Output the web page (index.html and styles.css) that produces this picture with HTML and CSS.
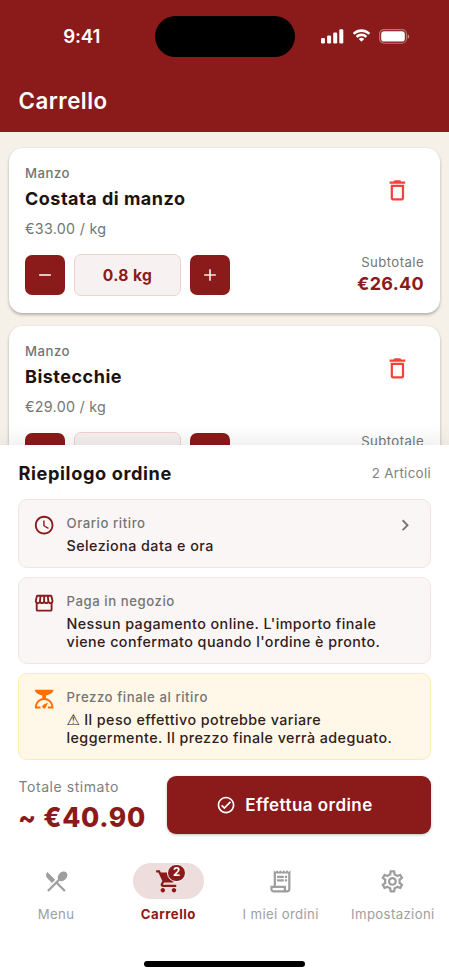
FILE: index.html
```html
<!DOCTYPE html>
<html lang="it">
<head>
<meta charset="utf-8">
<meta name="viewport" content="width=device-width, initial-scale=1">
<title>Carrello</title>
<link rel="stylesheet" href="styles.css">
</head>
<body>
<svg class="defs" aria-hidden="true">
  <symbol id="trash" viewBox="0 0 24 24"><path d="M6 19c0 1.1.9 2 2 2h8c1.1 0 2-.9 2-2V7H6v12zM8 9h8v10H8V9zm7.5-5l-1-1h-5l-1 1H5v2h14V4h-3.5z"/></symbol>
  <symbol id="minus" viewBox="0 0 24 24"><path d="M19 13H5v-2h14v2z"/></symbol>
  <symbol id="plus" viewBox="0 0 24 24"><path d="M19 13h-6v6h-2v-6H5v-2h6V5h2v6h6v2z"/></symbol>
</svg>
<div class="app">
  <header class="header">
    <div class="status">
      <span class="time">9:41</span>
      <div class="island"></div>
      <div class="signals">
        <svg width="23" height="15" viewBox="0 0 23 15"><rect x="0" y="9" width="4" height="5.5" rx="1.2"/><rect x="6.1" y="6.6" width="4" height="7.9" rx="1.2"/><rect x="12.2" y="3.6" width="4" height="10.9" rx="1.2"/><rect x="18.3" y="0.2" width="4" height="14.3" rx="1.2"/></svg>
        <svg class="wifi" width="19" height="15" viewBox="0 0 19 15"><path d="M9.5 2.9c2.5 0 4.9 1 6.7 2.7.15.14.36.14.5 0l1.3-1.35c.15-.15.15-.4 0-.55C13.3-.9 5.7-.9 1 3.7c-.15.15-.15.4 0 .55l1.3 1.35c.14.14.36.14.5 0C4.6 3.9 7 2.9 9.5 2.9zM9.5 7.25c1.37 0 2.69.5 3.7 1.43.14.13.36.13.5-.01l1.3-1.35c.15-.15.15-.4 0-.55-3.1-2.93-7.9-2.93-11 0-.15.15-.15.4 0 .55l1.3 1.35c.14.14.36.14.5.01A5.45 5.45 0 0 1 9.5 7.25zM12 10.3c.15-.15.15-.4-.01-.54a3.8 3.8 0 0 0-4.98 0c-.16.14-.16.39-.01.54l2.25 2.3c.14.14.36.14.5 0z"/></svg>
        <svg class="battery" width="31" height="15" viewBox="0 0 31 15"><rect x=".6" y=".6" width="26.8" height="13.6" rx="4.3" fill="none" stroke="#fff" stroke-opacity=".4" stroke-width="1.1"/><rect x="2.2" y="2.2" width="23.6" height="10.4" rx="2.9"/><path fill-opacity=".5" d="M28.7 5.2v4.6c.9-.4 1.5-1.3 1.5-2.3s-.6-1.9-1.5-2.3z"/></svg>
      </div>
    </div>
    <h1 class="title">Carrello</h1>
  </header>

  <main class="list">
    <article class="card">
      <div class="card-top">
        <div>
          <div class="category">Manzo</div>
          <h2 class="name">Costata di manzo</h2>
          <div class="price">€33.00 / kg</div>
        </div>
        <svg class="trash"><use href="#trash"/></svg>
      </div>
      <div class="card-bottom">
        <div class="stepper">
          <button class="step"><svg><use href="#minus"/></svg></button>
          <div class="qty">0.8 kg</div>
          <button class="step"><svg><use href="#plus"/></svg></button>
        </div>
        <div class="subtotal"><div class="sub-label">Subtotale</div><div class="sub-value">€26.40</div></div>
      </div>
    </article>
    <article class="card">
      <div class="card-top">
        <div>
          <div class="category">Manzo</div>
          <h2 class="name">Bistecchie</h2>
          <div class="price">€29.00 / kg</div>
        </div>
        <svg class="trash"><use href="#trash"/></svg>
      </div>
      <div class="card-bottom">
        <div class="stepper">
          <button class="step"></button>
          <div class="qty"></div>
          <button class="step"></button>
        </div>
        <div class="subtotal"><div class="sub-label">Subtotale</div></div>
      </div>
    </article>
  </main>

  <section class="sheet">
    <div class="sheet-head"><h2 class="sheet-title">Riepilogo ordine</h2><span class="count">2 Articoli</span></div>
    <div class="info info-short">
      <svg class="info-icon" viewBox="0 0 24 24"><path d="M11.99 2C6.47 2 2 6.48 2 12s4.47 10 9.99 10C17.52 22 22 17.52 22 12S17.52 2 11.99 2zM12 20c-4.42 0-8-3.58-8-8s3.58-8 8-8 8 3.58 8 8-3.58 8-8 8zm.5-13H11v6l5.25 3.15.75-1.23-4.5-2.67z"/></svg>
      <div class="info-body"><div class="info-label">Orario ritiro</div><div class="info-text">Seleziona data e ora</div></div>
      <svg class="chevron" viewBox="0 0 24 24"><path d="M10 6L8.59 7.41 13.17 12l-4.58 4.59L10 18l6-6z"/></svg>
    </div>
    <div class="info">
      <svg class="info-icon" viewBox="0 0 24 24"><path d="M21.9 8.89l-1.05-4.37c-.22-.9-1-1.52-1.91-1.52H5.05c-.9 0-1.69.63-1.9 1.52L2.1 8.89c-.24 1.02-.02 2.06.62 2.88.08.11.19.19.28.29V19c0 1.1.9 2 2 2h14c1.1 0 2-.9 2-2v-6.94c.09-.09.2-.18.28-.28.64-.82.87-1.87.62-2.89zm-2.99-3.9l1.05 4.37c.1.42.01.84-.25 1.17-.14.18-.44.47-.94.47-.61 0-1.14-.49-1.21-1.14L16.98 5l1.93-.01zM13 5h1.96l.54 4.52c.05.39-.07.78-.33 1.07-.22.26-.54.41-.95.41-.67 0-1.22-.59-1.22-1.31V5zM8.49 9.52L9.04 5H11v4.69c0 .72-.55 1.31-1.29 1.31-.34 0-.65-.15-.89-.41-.25-.29-.37-.68-.33-1.07zm-4.45-.16L5.05 5h1.97l-.58 4.86c-.08.65-.6 1.14-1.21 1.14-.49 0-.8-.29-.93-.47-.27-.32-.36-.75-.26-1.17zM5 19v-6.03c.08.01.15.03.23.03.87 0 1.66-.36 2.24-.95.6.6 1.4.95 2.31.95.87 0 1.65-.36 2.23-.93.59.57 1.39.93 2.29.93.84 0 1.64-.35 2.24-.95.58.59 1.37.95 2.24.95.08 0 .15-.02.23-.03V19H5z"/></svg>
      <div class="info-body"><div class="info-label">Paga in negozio</div><div class="info-text">Nessun pagamento online. L'importo finale<br>viene confermato quando l'ordine è pronto.</div></div>
    </div>
    <div class="info info-warn">
      <svg class="info-icon" viewBox="0 0 24 24"><path d="M14 11V8c4.56-.58 8-3.1 8-6H2c0 2.9 3.44 5.42 8 6v3c-3.68.73-8 3.61-8 11h6v-2H4.13c.93-6.83 6.65-7.2 7.87-7.2s6.94.37 7.87 7.2H16v2h6c0-7.39-4.32-10.27-8-11zM12 22c-1.1 0-2-.9-2-2 0-.55.22-1.05.59-1.41C11.39 17.79 16 16 16 16s-1.79 4.61-2.59 5.41c-.36.37-.86.59-1.41.59z"/></svg>
      <div class="info-body"><div class="info-label">Prezzo finale al ritiro</div><div class="info-text"><span class="warn-sign">⚠</span> Il peso effettivo potrebbe variare<br>leggermente. Il prezzo finale verrà adeguato.</div></div>
    </div>
    <div class="checkout">
      <div class="total"><div class="total-label">Totale stimato</div><div class="total-value">~ €40.90</div></div>
      <button class="order"><svg viewBox="0 0 24 24"><path d="M16.59 7.58L10 14.17l-2.59-2.58L6 13l4 4 8-8zM12 2C6.48 2 2 6.48 2 12s4.48 10 10 10 10-4.48 10-10S17.52 2 12 2zm0 18c-4.42 0-8-3.58-8-8s3.58-8 8-8 8 3.58 8 8-3.58 8-8 8z"/></svg><span>Effettua ordine</span></button>
    </div>
  </section>

  <nav class="nav">
    <a class="tab"><span class="pill"><svg viewBox="0 0 24 24"><path d="M8.1 13.34l2.83-2.83L3.91 3.5c-1.56 1.56-1.56 4.09 0 5.66l4.19 4.18zm6.78-1.81c1.53.71 3.68.21 5.27-1.38 1.91-1.91 2.28-4.65.81-6.12-1.46-1.46-4.2-1.1-6.12.81-1.59 1.59-2.09 3.74-1.38 5.27L3.7 19.87l1.41 1.41L12 14.41l6.88 6.88 1.41-1.41L13.41 13l1.47-1.47z"/></svg></span><span class="tab-label">Menu</span></a>
    <a class="tab active"><span class="pill"><svg viewBox="0 0 24 24"><path d="M7 18c-1.1 0-1.99.9-1.99 2S5.9 22 7 22s2-.9 2-2-.9-2-2-2zM1 2v2h2l3.6 7.59-1.35 2.45c-.16.28-.25.61-.25.96 0 1.1.9 2 2 2h12v-2H7.42c-.14 0-.25-.11-.25-.25l.03-.12.9-1.63h7.45c.75 0 1.41-.41 1.75-1.03l3.58-6.49c.08-.14.12-.31.12-.48 0-.55-.45-1-1-1H5.21l-.94-2H1zm16 16c-1.1 0-1.99.9-1.99 2s.89 2 1.99 2 2-.9 2-2-.9-2-2-2z"/></svg><span class="badge">2</span></span><span class="tab-label">Carrello</span></a>
    <a class="tab"><span class="pill"><svg viewBox="0 0 24 24"><path d="M19.5 3.5L18 2l-1.5 1.5L15 2l-1.5 1.5L12 2l-1.5 1.5L9 2 7.5 3.5 6 2v14H3v3c0 1.66 1.34 3 3 3h12c1.66 0 3-1.34 3-3V2l-1.5 1.5zM15 20H6c-.55 0-1-.45-1-1v-1h10v2zm4-1c0 .55-.45 1-1 1s-1-.45-1-1v-3H8V5h11v14z"/><path d="M9 7h6v2H9zM16 7h2v2h-2zM9 10h6v2H9zM16 10h2v2h-2z"/></svg></span><span class="tab-label">I miei ordini</span></a>
    <a class="tab"><span class="pill"><svg viewBox="0 0 24 24"><path d="M19.43 12.98c.04-.32.07-.64.07-.98 0-.34-.03-.66-.07-.98l2.11-1.65c.19-.15.24-.42.12-.64l-2-3.46c-.09-.16-.26-.25-.44-.25-.06 0-.12.01-.17.03l-2.49 1c-.52-.4-1.08-.73-1.69-.98l-.38-2.65C14.46 2.18 14.25 2 14 2h-4c-.25 0-.46.18-.49.42l-.38 2.65c-.61.25-1.17.59-1.69.98l-2.49-1c-.06-.02-.12-.03-.18-.03-.17 0-.34.09-.43.25l-2 3.46c-.13.22-.07.49.12.64l2.11 1.65c-.04.32-.07.65-.07.98 0 .33.03.66.07.98l-2.11 1.65c-.19.15-.24.42-.12.64l2 3.46c.09.16.26.25.44.25.06 0 .12-.01.17-.03l2.49-1c.52.4 1.08.73 1.69.98l.38 2.65c.03.24.24.42.49.42h4c.25 0 .46-.18.49-.42l.38-2.65c.61-.25 1.17-.59 1.69-.98l2.49 1c.06.02.12.03.18.03.17 0 .34-.09.43-.25l2-3.46c.12-.22.07-.49-.12-.64l-2.11-1.65zm-1.98-1.71c.04.31.05.52.05.73 0 .21-.02.43-.05.73l-.14 1.13.89.7 1.08.84-.7 1.21-1.27-.51-1.04-.42-.9.68c-.43.32-.84.56-1.25.73l-1.06.43-.16 1.13-.2 1.35h-1.4l-.19-1.35-.16-1.13-1.06-.43c-.43-.18-.83-.41-1.23-.71l-.91-.7-1.06.43-1.27.51-.7-1.21 1.08-.84.89-.7-.14-1.13c-.03-.31-.05-.54-.05-.74s.02-.43.05-.73l.14-1.13-.89-.7-1.08-.84.7-1.21 1.27.51 1.04.42.9-.68c.43-.32.84-.56 1.25-.73l1.06-.43.16-1.13.2-1.35h1.39l.19 1.35.16 1.13 1.06.43c.43.18.83.41 1.23.71l.91.7 1.06-.43 1.27-.51.7 1.21-1.07.85-.89.7.14 1.13zM12 8c-2.21 0-4 1.79-4 4s1.79 4 4 4 4-1.79 4-4-1.79-4-4-4zm0 6c-1.1 0-2-.9-2-2s.9-2 2-2 2 .9 2 2-.9 2-2 2z"/></svg></span><span class="tab-label">Impostazioni</span></a>
  </nav>
  <div class="home"></div>
</div>
</body>
</html>
```
FILE: styles.css
```css
* { box-sizing: border-box; }
body { margin: 0; font-family: Inter, "Liberation Sans", sans-serif; background: #fff; }
h1, h2 { margin: 0; }
button { border: 0; padding: 0; font-family: inherit; }
svg { display: block; fill: currentColor; flex: none; }
.defs { position: absolute; width: 0; height: 0; }
.app { width: 449px; height: 976px; overflow: hidden; display: flex; flex-direction: column; background: #fff; }

.header { height: 132px; background: #8b1a1a; color: #fff; flex: none; }
.status { height: 73px; display: grid; grid-template-columns: 154.5px 140px 1fr; align-items: center; }
.time { padding-left: 9px; text-align: center; font-size: 18.7px; font-weight: 600; letter-spacing: -.2px; }
.island { height: 41px; border-radius: 21px; background: #000; }
.signals { display: flex; align-items: center; padding-left: 26.5px; }
.wifi { margin-left: 7.5px; }
.battery { margin-left: 8px; }
.title { padding: 14px 0 0 18.5px; font-size: 22.3px; line-height: 28px; font-weight: 600; letter-spacing: .5px; }

.list { height: 312.5px; flex: none; overflow: hidden; background: #f5f0e8; padding: 15.7px 9px 0; }
.card { height: 165px; margin-bottom: 13.7px; padding: 16px; background: #fff; border-radius: 13.4px; box-shadow: 0 2px 3px rgba(0,0,0,.25), 0 0 2px rgba(0,0,0,.08); }
.card-top { display: flex; justify-content: space-between; height: 90px; }
.category { font-size: 13.2px; line-height: 18px; font-weight: 500; letter-spacing: .5px; color: #757575; }
.name { margin-top: 4px; font-size: 18px; line-height: 25px; font-weight: 650; letter-spacing: .5px; color: #201210; }
.price { margin-top: 8px; font-size: 14.3px; line-height: 20px; letter-spacing: .28px; color: #757575; }
.trash { width: 26.8px; height: 26.8px; margin: 13px 13px 0 0; color: #f44336; }
.card-bottom { display: flex; justify-content: space-between; }
.stepper { display: flex; align-items: center; gap: 9px; height: 42px; }
.step { width: 40px; height: 40px; border-radius: 7px; background: #8b1a1a; color: #fff; display: grid; place-items: center; }
.step svg { width: 20px; height: 20px; opacity: .9; }
.qty { width: 107px; height: 42px; border: 1px solid #ecd2d3; border-radius: 7px; background: #f8f1f1; color: #8b1a1a; font-size: 15.6px; line-height: 41px; font-weight: 650; letter-spacing: .35px; text-align: center; }
.subtotal { text-align: right; }
.sub-label { margin-top: -.5px; font-size: 13.2px; line-height: 18px; letter-spacing: .42px; color: #757575; }
.sub-value { margin-top: 1px; font-size: 18px; line-height: 24px; font-weight: 700; letter-spacing: .3px; color: #8b1a1a; }

.sheet { position: relative; flex: none; height: 408px; padding: 13.5px 18px 0; background: #fff; box-shadow: 0 -2px 22px rgba(0,0,0,.1); }
.sheet-head { display: flex; justify-content: space-between; align-items: center; height: 30px; margin-bottom: 11px; }
.sheet-title { padding-left: .5px; font-size: 18.2px; font-weight: 750; letter-spacing: .6px; color: #201210; }
.count { font-size: 13.4px; letter-spacing: .3px; color: #808080; }
.info { display: flex; height: 87px; margin-bottom: 9px; padding: 14px 14px 0; border: 1px solid #f3e4e4; border-radius: 9px; background: #faf6f6; color: #8b1a1a; }
.info-short { height: 69px; }
.info-icon { width: 22.3px; height: 22.3px; }
.info-body { flex: 1; margin-left: 11.2px; }
.info-label { font-size: 13.2px; line-height: 19px; font-weight: 500; letter-spacing: .55px; color: #757575; }
.info-text { margin-top: 3.5px; font-size: 14.3px; line-height: 18px; font-weight: 500; letter-spacing: .44px; color: #302019; white-space: nowrap; }
.chevron { width: 22.3px; height: 22.3px; color: #757575; }
.info-warn { background: #fff8e9; border-color: #ffecb3; }
.info-warn .info-icon { color: #ff6f00; }
.warn-sign { font-family: "DejaVu Sans", sans-serif; font-size: 15px; line-height: 1; letter-spacing: 0; }
.checkout { display: flex; padding-top: 7px; }
.total { width: 149px; }
.total-label { padding-left: .5px; margin-top: .5px; font-size: 14px; line-height: 20px; letter-spacing: .55px; color: #808080; }
.total-value { margin-top: 3px; font-size: 26.4px; line-height: 34px; font-weight: 800; letter-spacing: .7px; color: #8b1a1a; white-space: nowrap; }
.order { width: 264px; height: 58px; padding-right: 9px; border-radius: 9px; background: #8b1a1a; color: #fff; display: flex; align-items: center; justify-content: center; gap: 9px; font-size: 17px; font-weight: 600; letter-spacing: .45px; box-shadow: 0 1px 3px rgba(0,0,0,.25); }
.order svg { width: 20.1px; height: 20.1px; }

.nav { position: relative; display: flex; height: 108px; flex: none; padding-top: 10.5px; background: #fff; }
.tab { flex: 1; display: flex; flex-direction: column; align-items: center; color: #9e9e9e; }
.pill { position: relative; width: 71px; height: 36px; border-radius: 18px; display: grid; place-items: center; }
.pill svg { width: 26.8px; height: 26.8px; }
.tab-label { margin-top: 5px; font-size: 13.2px; line-height: 20px; letter-spacing: .37px; white-space: nowrap; }
.active { color: #8b1a1a; }
.active .pill { background: #eedddd; }
.active .tab-label { font-weight: 700; letter-spacing: .5px; }
.badge { position: absolute; left: 34.5px; top: .5px; width: 18.5px; height: 18px; border: 1.5px solid #fff; border-radius: 9px; background: #8b1a1a; color: #fff; font-size: 11.5px; line-height: 15.5px; font-weight: 700; text-align: center; }
.home { width: 161px; height: 6px; margin: 0 auto; border-radius: 3px; background: #000; flex: none; }
```
